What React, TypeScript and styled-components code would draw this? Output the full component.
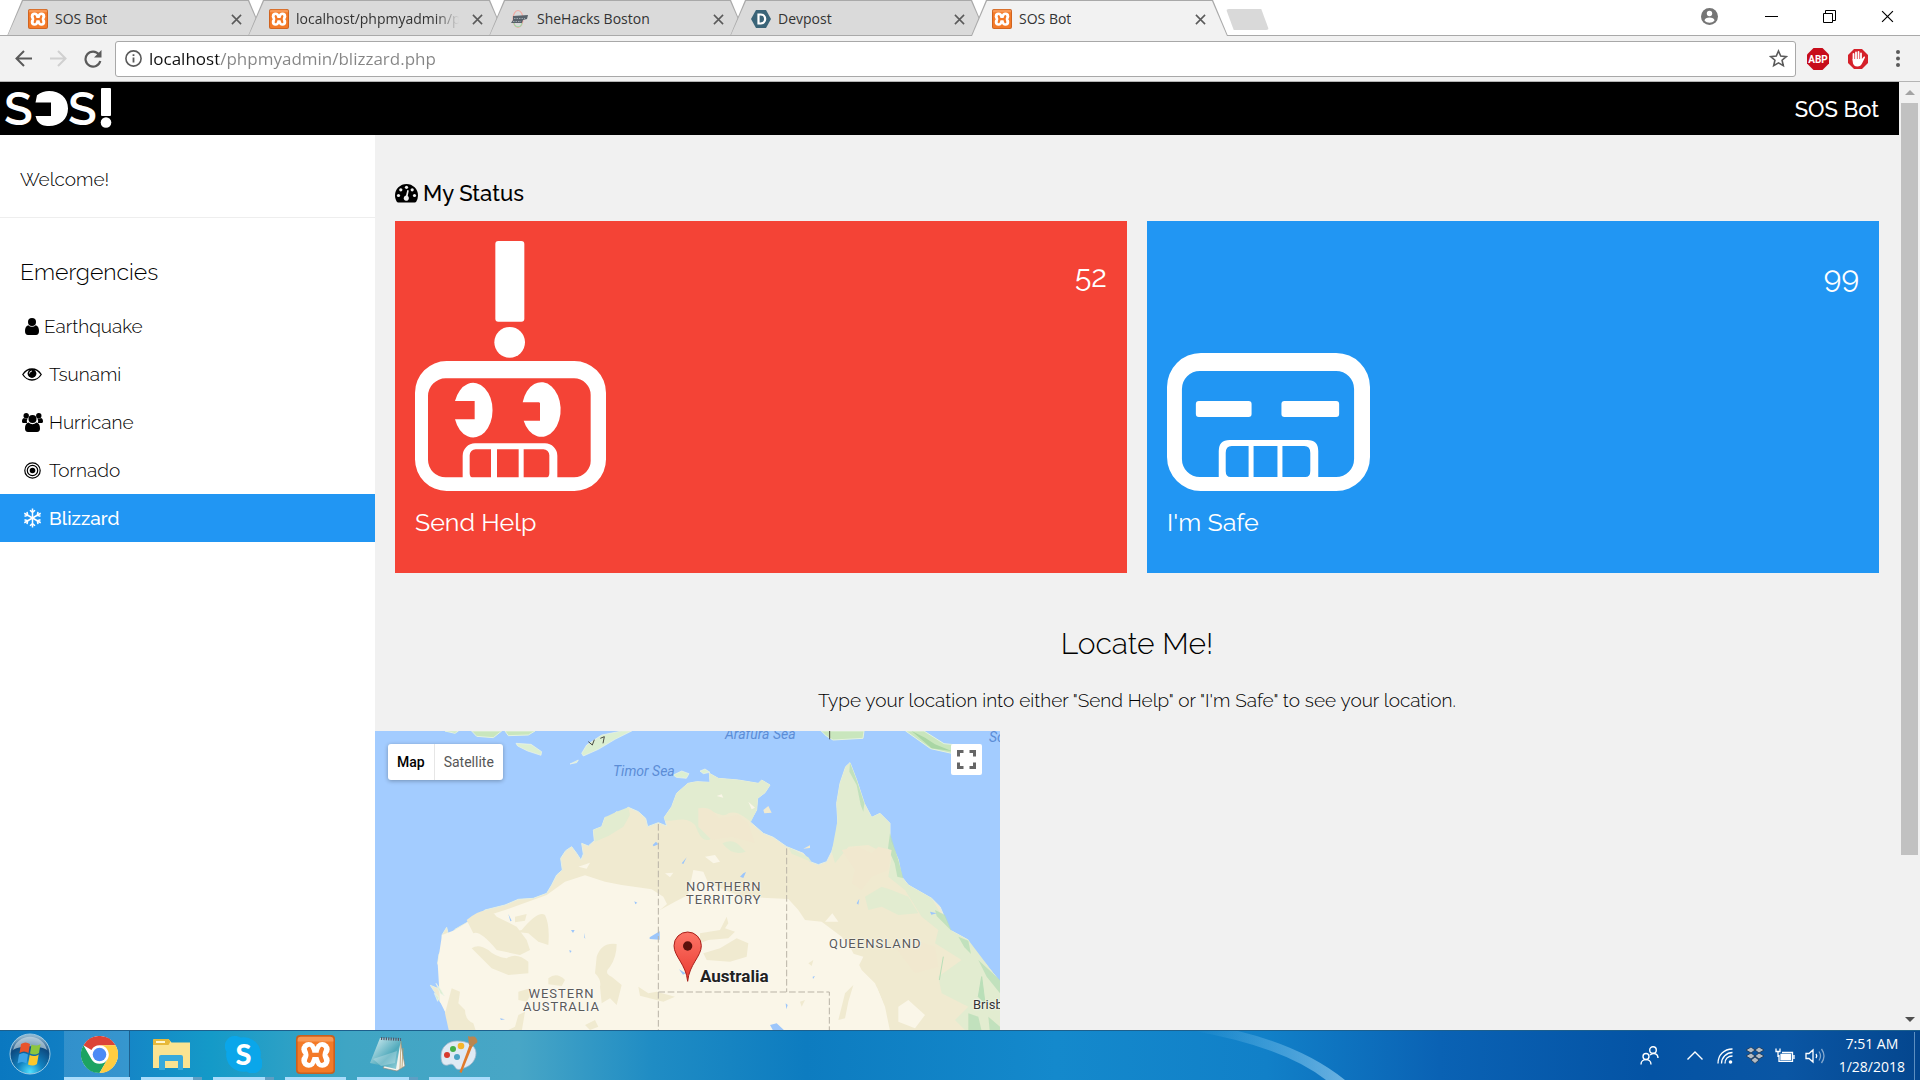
import React from "react";
import styled, { createGlobalStyle, css } from "styled-components";

const pageFont = `Raleway, Lato, "Open Sans", sans-serif`;
const uiFont = `"Segoe UI", "Open Sans", "Noto Sans", sans-serif`;
const mapFont = `Roboto, "Liberation Sans", sans-serif`;

const GlobalStyle = createGlobalStyle`
  *, *::before, *::after { box-sizing: border-box; }
  body { margin: 0; overflow: hidden; font-family: ${uiFont}; }
  button, input { font: inherit; }
  h1, h2, h3, p, ul { margin: 0; padding: 0; font-weight: 300; }
  ul { list-style: none; }
  a { color: inherit; text-decoration: none; }
  svg { display: block; flex: none; }
`;

const Desktop = styled.div`
  display: flex;
  flex-direction: column;
  height: 100vh;
  background: #fff;
`;

const PlainButton = styled.button`
  display: flex;
  align-items: center;
  justify-content: center;
  padding: 0;
  border: 0;
  background: none;
  color: #5a5a5a;
`;

/* ---------- Browser frame ---------- */

const TabStrip = styled.header`
  display: flex;
  flex: none;
  height: 36px;
  padding-left: 7px;
  background: linear-gradient(#fff, #fff) 0 0 / 100% 35px no-repeat #a9a9a9;
`;

const Tabs = styled.div`
  display: flex;
`;

const TabShape = styled.div<{ $active?: boolean }>`
  position: relative;
  z-index: ${(p) => (p.$active ? 2 : 1)};
  display: flex;
  align-items: center;
  width: 257px;
  height: 36px;
  margin-right: -16px;
  padding: 2px 20px 0 21px;
  isolation: isolate;

  &::before,
  &::after {
    content: "";
    position: absolute;
    z-index: -1;
    inset: 0;
    background: #a9a9a9;
    clip-path: polygon(0 100%, 15px 0, calc(100% - 15px) 0, 100% 100%);
  }
  &::after {
    inset: 1px 1px ${(p) => (p.$active ? "0" : "1px")};
    background: ${(p) => (p.$active ? "#f2f2f2" : "#dadada")};
  }
`;

const TabTitle = styled.button<{ $fade?: boolean }>`
  display: flex;
  flex: 1;
  align-items: center;
  gap: 7px;
  min-width: 0;
  padding: 0;
  border: 0;
  background: none;
  color: #333;
  font-size: 14px;
  line-height: 24px;
  white-space: nowrap;

  span {
    overflow: hidden;
    ${(p) =>
      p.$fade &&
      css`
        mask-image: linear-gradient(to right, #000 calc(100% - 24px), transparent);
      `}
  }
`;

const TabClose = styled(PlainButton)`
  width: 16px;
  height: 16px;
  margin-left: 10px;
`;

const NewTab = styled(PlainButton)`
  width: 43px;
  height: 21px;
  margin: 9px 0 0 14px;
  border-radius: 3px;
  background: #d9d9d9;
  clip-path: polygon(0 0, 82% 0, 100% 100%, 18% 100%);
`;

const WindowControls = styled.div`
  display: flex;
  align-items: center;
  gap: 28px;
  height: 32px;
  margin-left: auto;
  padding-right: 18px;

  button {
    width: 30px;
    height: 30px;
    color: #000;
  }
  button:first-child {
    margin-right: 4px;
  }
`;

const Toolbar = styled.nav`
  display: flex;
  flex: none;
  align-items: center;
  height: 46px;
  padding: 0 10px 0 12px;
  background: #f2f2f2;
  border-bottom: 1px solid #b4b4b4;
`;

const NavButtons = styled.div`
  display: flex;
  gap: 13px;
  margin-right: 11px;

  button {
    width: 22px;
    height: 24px;
  }
`;

const AddressBar = styled.div`
  display: flex;
  flex: 1;
  align-items: center;
  gap: 7px;
  height: 36px;
  padding: 0 7px 0 9px;
  border: 1px solid #a8a8a8;
  border-radius: 3px;
  background: #fff;
  color: #5a5a5a;
`;

const AddressInput = styled.input`
  flex: 1;
  min-width: 0;
  padding: 0;
  border: 0;
  outline: 0;
  background: linear-gradient(to right, #111 69px, #858585 69px);
  background-clip: text;
  color: transparent;
  font-size: 17px;
  line-height: 30px;
`;

const Extensions = styled.div`
  display: flex;
  gap: 16px;
  margin-left: 10px;

  button {
    width: 24px;
    height: 24px;
  }
`;

/* ---------- Web page ---------- */

const Viewport = styled.div`
  display: flex;
  flex: 1;
  min-height: 0;
`;

const Page = styled.div`
  display: flex;
  flex: 1;
  flex-direction: column;
  min-width: 0;
  overflow: hidden;
  background: #f1f1f1;
  color: #000;
  font-family: ${pageFont};
`;

const TopBar = styled.div`
  display: flex;
  flex: none;
  align-items: center;
  justify-content: space-between;
  height: 53px;
  padding: 0 20px 0 5px;
  background: #000;
  color: #fff;
  font-size: 22px;
  font-weight: 500;
  line-height: 32px;
`;

const PageBody = styled.div`
  display: grid;
  grid-template-columns: 375px minmax(0, 1fr);
  flex: 1;
  min-height: 0;
`;

const Sidebar = styled.aside`
  background: #fff;
  font-size: 19px;
  font-weight: 300;
`;

const Welcome = styled.p`
  padding: 30px 20px 24px;
  border-bottom: 1px solid #eee;
  line-height: 28px;
`;

const SidebarTitle = styled.h2`
  padding: 37px 20px 13px;
  font-size: 23px;
  line-height: 34px;
`;

const MenuLink = styled.a<{ $active?: boolean; $tight?: boolean }>`
  display: flex;
  align-items: center;
  gap: ${(p) => (p.$tight ? "0" : "5px")};
  height: 48px;
  padding: 0 20px;

  ${(p) =>
    p.$active &&
    css`
      background: #2196f3;
      color: #fff;
      font-weight: 500;
    `}
`;

const IconSlot = styled.span`
  display: flex;
  justify-content: center;
  width: 24px;
`;

const Main = styled.main`
  min-width: 0;
`;

const StatusTitle = styled.h2`
  display: flex;
  align-items: center;
  gap: 5px;
  padding: 41px 20px 11px;
  font-size: 22px;
  font-weight: 500;
  line-height: 34px;
`;

const Cards = styled.div`
  display: grid;
  grid-template-columns: 1fr 1fr;
  gap: 20px;
  padding: 0 20px;
`;

const Card = styled.button<{ $color: string }>`
  display: flex;
  flex-direction: column;
  gap: 12px;
  padding: 20px 20px 32px;
  border: 0;
  background: ${(p) => p.$color};
  color: #fff;
  text-align: left;
`;

const CardTop = styled.span`
  display: flex;
  align-items: flex-end;
  justify-content: space-between;
  width: 100%;
  height: 250px;
`;

const Count = styled.span`
  align-self: flex-start;
  padding-top: 14px;
  font-size: 30px;
  line-height: 44px;
`;

const CardLabel = styled.span`
  font-size: 25px;
  line-height: 38px;
`;

const Locate = styled.section`
  padding: 48px 0 17px;
  text-align: center;
`;

const LocateTitle = styled.h2`
  font-size: 30px;
  line-height: 45px;
`;

const LocateHint = styled.p`
  padding-top: 20px;
  font-size: 19px;
  line-height: 28px;
`;

const MapCanvas = styled.div`
  position: relative;
  width: 625px;
  height: 400px;
  overflow: hidden;
  background: #a3ccff;
  font-family: ${mapFont};
`;

const MapLabel = styled.span<{ $x: number; $y: number; $kind: "sea" | "region" | "country" | "city" }>`
  position: absolute;
  left: ${(p) => p.$x}px;
  top: ${(p) => p.$y}px;
  text-align: center;
  white-space: pre;
  font-size: 13px;
  line-height: 13px;
  color: #5a5a5a;
  text-shadow: 0 0 2px #fff, 0 0 2px #fff;

  ${(p) =>
    p.$kind === "sea" &&
    css`
      color: #5c8dd6;
      font-size: 14px;
      font-style: italic;
      text-shadow: none;
    `}
  ${(p) =>
    p.$kind === "region" &&
    css`
      letter-spacing: 1px;
    `}
  ${(p) =>
    p.$kind === "city" &&
    css`
      color: #333;
    `}
  ${(p) =>
    p.$kind === "country" &&
    css`
      color: #222;
      font-size: 17px;
      font-weight: 700;
    `}
`;

const MapTypes = styled.div`
  position: absolute;
  left: 13px;
  top: 13px;
  display: flex;
  height: 36px;
  border-radius: 3px;
  background: #fff;
  box-shadow: 0 1px 4px rgba(0, 0, 0, 0.3);
`;

const MapType = styled(PlainButton)<{ $on?: boolean }>`
  padding: 0 9px;
  color: ${(p) => (p.$on ? "#000" : "#565656")};
  font-size: 14px;
  font-weight: ${(p) => (p.$on ? 500 : 400)};

  & + & {
    border-left: 1px solid #e6e6e6;
  }
`;

const Fullscreen = styled(PlainButton)`
  position: absolute;
  right: 18px;
  top: 13px;
  width: 31px;
  height: 31px;
  border-radius: 2px;
  background: #fff;
`;

const ScrollBar = styled.div`
  display: flex;
  flex: none;
  flex-direction: column;
  align-items: center;
  width: 21px;
  background: #f1f1f1;
`;

const ScrollArrow = styled(PlainButton)`
  width: 21px;
  height: 21px;
`;

const ScrollTrack = styled.div`
  flex: 1;
  width: 17px;
`;

const ScrollThumb = styled.div`
  height: 83%;
  background: #c1c1c1;
`;

/* ---------- Taskbar ---------- */

const TaskBar = styled.footer`
  position: relative;
  display: flex;
  flex: none;
  height: 50px;
  border-top: 1px solid #1d5f8c;
  background: linear-gradient(
    to right,
    #0a78c0 0,
    #1583c6 6%,
    #149ac8 11%,
    #3fa5c4 18%,
    #48a6c6 27%,
    #1f8cc4 34%,
    #0d7cc0 42%,
    #1489cc 55%,
    #1180c8 66%,
    #0a62b4 75%,
    #0453a4 86%,
    #0a56a4 93%,
    #04468e 100%
  );
  color: #fff;
`;

const Glow = styled.svg`
  position: absolute;
  left: 58%;
  top: 0;
`;

const StartButton = styled(PlainButton)`
  width: 60px;
  padding-bottom: 4px;
`;

const Apps = styled.div`
  display: flex;
  align-items: flex-end;
  gap: 11px;
  padding-left: 4px;
`;

const TaskButton = styled(PlainButton)<{ $active?: boolean; $stacked?: boolean }>`
  width: ${(p) => (p.$active ? "66px" : "61px")};
  height: 49px;
  border-bottom: 3px solid #aadcfb;
  ${(p) =>
    p.$active &&
    css`
      padding-left: 4px;
      background: linear-gradient(to right, rgba(255, 255, 255, 0.14) 65px, #1c5f8f 65px);
    `}
  ${(p) =>
    p.$stacked &&
    css`
      border-image: linear-gradient(to right, #aadcfb 50px, #5f9fc4 50px) 3;
    `}
`;

const Tray = styled.div`
  position: relative;
  display: flex;
  align-items: center;
  margin-left: auto;
`;

const TrayIcons = styled.div`
  display: flex;
  gap: 6px;
  padding-right: 12px;

  button {
    width: 24px;
    height: 24px;
    color: #fff;
  }
  button:first-child {
    margin-right: 15px;
  }
`;

const Clock = styled.div`
  display: flex;
  flex-direction: column;
  align-items: center;
  padding: 0 9px 2px 0;
  border-right: 1px solid #5d8fc0;
  margin-right: 5px;
  font-size: 14px;
  line-height: 23px;
`;

/* ---------- Drawings ---------- */

const Xampp = ({ size = 20 }: { size?: number }) => (
  <svg width={size} height={size} viewBox="0 0 24 24">
    <rect width="24" height="24" rx="2.5" fill="#c9601f" />
    <rect x="1" y="1" width="22" height="22" rx="2" fill="#f47a28" />
    <path d="M1 3a2 2 0 0 1 2-2h18a2 2 0 0 1 2 2v1H1z" fill="#f9a566" opacity=".7" />
    <g fill="#fff">
      <circle cx="7.800" cy="8.800" r="4.500" />
      <circle cx="16.200" cy="8.800" r="4.500" />
      <circle cx="7.800" cy="15.700" r="4.500" />
      <circle cx="16.200" cy="15.700" r="4.500" />
      <path d="M9 7.500h6v9.500H9z" />
    </g>
    <path
      d="M8 8.600q2 3.600 0 7.200M16 8.600q-2 3.600 0 7.200M9.500 12.200h5"
      fill="none"
      stroke="#f47a28"
      strokeWidth="2.600"
      strokeLinecap="round"
    />
  </svg>
);

const SheHacks = () => (
  <svg width="20" height="20" viewBox="0 0 20 20">
    <ellipse cx="8" cy="10" rx="5" ry="8.500" fill="none" stroke="#f2a8a0" strokeWidth="1.200" />
    <path d="M4 14c1 5 7 5 8 0" fill="none" stroke="#9fd8a8" strokeWidth="1.200" />
    <path d="M3 7l15-1-1 4-4 1-1 3H1l2-3z" fill="#59626b" />
    <path d="M4 9.500h11M3 12.500h8" stroke="#aeb6bd" strokeWidth=".8" strokeDasharray="1.500 1" />
  </svg>
);

const Devpost = () => (
  <svg width="20" height="20" viewBox="0 0 20 20">
    <path d="M5 1h10l5 9-5 9H5l-5-9z" fill="#3a6478" />
    <path d="M7.500 5.500h2.200a4.500 4.500 0 0 1 0 9H7.500z" fill="none" stroke="#fff" strokeWidth="2.200" />
  </svg>
);

const Cross = ({ size = 11, width = 1.7 }: { size?: number; width?: number }) => (
  <svg width={size} height={size} viewBox="0 0 12 12" stroke="currentColor" strokeWidth={width}>
    <path d="M1 1l10 10M11 1L1 11" />
  </svg>
);

const LogoArt = styled.svg`
  overflow: visible;
  fill: #fff;
  font-family: ${pageFont};
  font-size: 47px;
  font-weight: 600;
`;

const Logo = () => (
  <LogoArt width="108" height="42" viewBox="0 0 108 42" role="img" aria-label="SOS!">
    <text x="-1" y="37">S</text>
    <path d="M32 7.200C36 4 40 3 44 3c11 0 19 7 19 17.500S55 38 44 38c-5 0-9-1-12-5.500L30.500 28H46V14.500H30.500z" />
    <text x="63" y="37">S</text>
    <rect x="96" y="0" width="10" height="28" rx="1" />
    <circle cx="101" cy="34.500" r="5.300" />
  </LogoArt>
);

const AlertRobot = () => (
  <svg width="191" height="250" viewBox="0 0 573 750" fill="#fff" fillRule="evenodd">
    <rect x="241" width="87" height="242" rx="9" />
    <circle cx="284" cy="304" r="46" />
    <path d="M95 360h383a95 95 0 0 1 95 95v200a95 95 0 0 1-95 95H95a95 95 0 0 1-95-95V455a95 95 0 0 1 95-95zM92 412a53 53 0 0 0-53 53v191a53 53 0 0 0 53 53h385a50 50 0 0 0 50-53V462a50 50 0 0 0-50-50z" />
    <path d="M120 480a58 82 0 1 1 0 55h59v-55z" />
    <path d="M323 484a58 82 0 1 1 3 55h49v-52a4 4 0 0 0-4-3z" />
    <path d="M180 607h210a37 37 0 0 1 37 37v80H143v-80a37 37 0 0 1 37-37zM182 625a18 18 0 0 0-18 18v54q0 15 14 15h50v-87zM246 625v87h65v-87zM326 625v87h63q14 0 14-15v-54a18 18 0 0 0-18-18z" />
  </svg>
);

const CalmRobot = () => (
  <svg width="203" height="138" viewBox="0 0 204 138" preserveAspectRatio="none" fill="#fff" fillRule="evenodd">
    <path d="M34 0h136a34 34 0 0 1 34 34v70a34 34 0 0 1-34 34H34a34 34 0 0 1-34-34V34A34 34 0 0 1 34 0zM33 18a18 18 0 0 0-18 18v70a18 18 0 0 0 18 18h137a18 18 0 0 0 18-18V36a18 18 0 0 0-18-18z" />
    <rect x="29" y="48" width="56" height="16" rx="3" />
    <rect x="115" y="48" width="58" height="16" rx="3" />
    <path d="M63 87h78q11 0 11 11v30H52V98q0-11 11-11zM65 93q-6 0-6 7v18q0 6 5 6h18V93zM87 93v31h24V93zM116 93v31h23q5 0 5-6v-18q0-7-6-7z" />
  </svg>
);

const UserIcon = () => (
  <svg width="14" height="17" viewBox="0 0 14 17" fill="currentColor">
    <circle cx="7" cy="4" r="4" />
    <path d="M3.300 7.200C1 7.800 0 10 0 13c0 2.400 1.100 4 3 4h8c1.900 0 3-1.600 3-4 0-3-1-5.200-3.300-5.800a5.200 5.200 0 0 1-7.400 0z" />
  </svg>
);

const EyeIcon = () => (
  <svg width="20" height="13" viewBox="0 0 20 13">
    <path d="M.8 6.500C3 3 6 1 10 1s7 2 9.200 5.500C17 10 14 12 10 12S3 10 .8 6.500z" fill="none" stroke="currentColor" strokeWidth="1.300" />
    <circle cx="10" cy="5.500" r="4.400" fill="currentColor" />
    <path d="M7.500 5.500A2.500 2.500 0 0 1 10 3" fill="none" stroke="#fff" strokeWidth=".9" />
  </svg>
);

const UsersIcon = () => (
  <svg width="21" height="19" viewBox="0 0 21 19" fill="currentColor">
    <circle cx="4.200" cy="2.700" r="2.700" />
    <circle cx="16.800" cy="2.700" r="2.700" />
    <circle cx="10.500" cy="6" r="4" />
    <path d="M2 5C.5 5.300 0 6.700 0 8.500 0 9.600.8 10 1.800 10h3.400A6 6 0 0 1 5.600 5.300 4 4 0 0 1 2 5zM19 5c1.500.3 2 1.700 2 3.500 0 1.100-.8 1.500-1.800 1.500h-3.400a6 6 0 0 0-.4-4.700A4 4 0 0 0 19 5z" />
    <path d="M6.600 9.500C4 10 3 12.300 3 15.500 3 17.800 4 19 6 19h9c2 0 3-1.200 3-3.500 0-3.200-1-5.500-3.600-6a5.400 5.400 0 0 1-7.800 0z" />
  </svg>
);

const TargetIcon = () => (
  <svg width="17" height="17" viewBox="0 0 17 17" fill="none" stroke="currentColor">
    <circle cx="8.500" cy="8.500" r="7.700" strokeWidth="1.200" />
    <circle cx="8.500" cy="8.500" r="5.200" strokeWidth="1.200" />
    <circle cx="8.500" cy="8.500" r="2.800" fill="currentColor" stroke="none" />
  </svg>
);

const SnowIcon = () => (
  <svg width="19" height="20" viewBox="0 0 19 20" fill="none" stroke="currentColor" strokeWidth="1.500">
    {[0, 60, 120, 180, 240, 300].map((a) => (
      <path key={a} transform={`rotate(${a} 9.500 10)`} d="M9.500 10V.5M7 2.200l2.500 2.300L12 2.200" />
    ))}
  </svg>
);

const DashIcon = () => (
  <svg width="23" height="19" viewBox="0 0 23 19">
    <path d="M11.500 0A11.500 11.500 0 0 0 0 11.500c0 2.300.7 4.400 1.800 6.200.3.500.8.800 1.400.8h16.600c.6 0 1.100-.3 1.400-.8a11.500 11.500 0 0 0 1.800-6.200A11.500 11.500 0 0 0 11.500 0z" />
    <g fill="#f1f1f1">
      <circle cx="3.500" cy="11.500" r="1.600" />
      <circle cx="5.800" cy="5.800" r="1.600" />
      <circle cx="11.500" cy="3.300" r="1.600" />
      <circle cx="17.200" cy="5.800" r="1.600" />
      <circle cx="19.500" cy="11.500" r="1.600" />
      <path d="M12.300 6l1.500.4-1.100 5.600a2.600 2.600 0 1 1-1.700-.4z" />
    </g>
  </svg>
);

const lake = "#9cc6fb";

const AustraliaMap = () => (
  <svg width="625" height="400" viewBox="0 3 1875 1200">
    <path
      d="M225 1203L228 890 215 855 205 825 195 815 185 795 166 766 188 775 205 808 220 800 219 780 207 752 195 715 188 700 192 672 205 655 201 615 215 592 222 622 240 598 280 575 330 540 390 525 430 508 475 505 515 490 530 465 545 435 562 420 557 385 572 362 590 350 605 370 618 390 625 372 620 340 640 348 658 332 655 300 680 290 690 262 705 262 725 245 735 250 760 232 790 245 812 265 818 290 850 278 875 288 868 262 890 230 905 190 939 160 965 155 1005 157 1003 130 1030 145 1090 150 1150 160 1160 150 1185 165 1170 188 1148 205 1145 240 1125 275 1165 310 1195 322 1235 350 1285 370 1305 395 1330 404 1355 395 1370 365 1385 320 1388 270 1385 220 1395 160 1412 110 1425 98 1445 150 1468 220 1490 262 1515 250 1545 280 1545 330 1570 390 1580 440 1600 465 1670 505 1695 530 1725 600 1780 630 1790 670 1830 700 1875 755V1203z"
      fill="#f0ead0"
      stroke="#e6f0e2"
      strokeWidth="3"
    />
    <g fill="#e2ecd0">
      <path d="M870 272L868 262 890 230 905 190 939 160 965 155 1005 157 1003 130 1030 145 1090 150 1150 160 1160 150 1185 165 1170 188 1148 205 1145 240 1128 275C1110 265 1090 240 1060 250 1040 270 1010 230 970 240 1010 280 1060 300 1020 320 985 345 975 320 960 285 930 255 900 275 870 272z" />
      <path d="M660 335L655 300 680 290 690 262 725 245 760 232 765 255 745 290 700 318z" />
      <path d="M1370 365L1388 270 1385 220 1395 160 1412 110 1425 98 1445 150 1468 220 1490 262 1515 250 1545 280 1545 330 1570 390 1580 440 1600 465 1670 505 1725 600 1780 630 1875 755V1203H1790L1770 900 1740 870 1780 830 1700 790 1690 740 1760 690 1680 640 1690 600 1640 560 1590 480 1540 440 1550 380 1480 345 1420 350 1380 400z" />
      <path d="M1042 340q30-15 50 5l20 20q-40 15-70-25zM1240 352l60 30 10 14-60-25zM1470 500l50-30 30 10 50 20 30 50-60 5-50-25-40 10z" />
    </g>
    <g fill="#b9dfb8">
      <path d="M1425 98l20 52 23 70-3 25-8-20-12-60-22-40zM1545 310l25 80 15 55-18-5-8-40-20-45zM1680 540l30 15 20 48-45-45zM1750 620l30 12 8 40-20-20zM1810 690l65 60v40l-40-50zM1780 850l30 10 10 43h-40zM1840 860l35 30v20h-30z" opacity=".8" />
      <path d="M1705 680l-12 70M1820 740l10 80-20-20z" stroke="#b9dfb8" strokeWidth="3" />
    </g>
    <g fill="#f1e8cf">
      <path d="M970 235q40-10 60 30l60-10 30 25 20 60-70-20-60 10-40-40zM1400 360l50-10 40 20 20-20 40 10-10 60-50 20-30 40-30-20 10-40zM1560 650l60-20 60 20 10 60-70 20z" />
    </g>
    <g fill="#faf6e8">
      <path d="M228 900L215 855 195 815 188 700 201 615 240 600 280 575 390 540 515 495 570 455 630 436 690 455 740 465 830 478 865 500 876 522 855 540 900 515 939 495 955 420 985 425 1000 460 1100 500 1240 507 1270 540 1290 570 1340 575 1400 620 1430 660 1460 720 1500 760 1530 830 1545 903V1203H225z" />
      <path d="M1350 575l22-25 18 25zM1430 670l35 10-20 40zM1480 810l25-40 20 50-20 20zM1570 830l30-20 50 45-30 40-50-20zM870 430l25-2-10 14zM990 380l30-5 15 20-20 5zM610 410l35-12-10 18zM1120 215l20 18-10 5zM1025 198l15-5 5 10z" />
    </g>
    <g fill="#f0ead0">
      <path d="M275 570q60-50 90-10l60 30 30 40 10 30-30 15-70-15q-50-60-70-50-10-20-20-40z" />
      <path d="M440 600q50-60 70-45 15 30 10 90l-30-10-30-25-40-5zM420 560l35-8-5 20-30 5zM290 655q20-15 50 5 20 20 55 25 30-20 65 10v35l-60 5-50-20z" />
      <path d="M665 680q15-45 60-38 0 40-20 68-20 20 5 30l30 25-15 60-20-20-25 15-5-50q5-20-15-40zM520 745q25-20 50 5l-10 18-40-5zM430 785l35-10 5 15-15 25-25-5zM230 775l25 10-5 35 20 20q0 30 25 40l20 60H230l-20-90zM630 885l30-15 10 20-25 10zM790 770l30 20 25-5 55 15-35 15-70-18zM430 855l20-10-10 60h-50l30-15z" />
      <path d="M975 610l60-10 20-40 5 20-10 15 30 10-20 20-60 5-25 10zM985 670l50-15 50-30 35 15-5 40-50 15-70-5zM1290 810l-10 20-5-15zM1410 790l25-25-15 50-10 50-20 5zM1300 700l15-10-5 18z" />
    </g>
    <g fill={lake}>
      <path d="M824 622l30-18v25l-30-2zM833 345l10-10 7 8-14 6zM778 514l9 4-6 5zM588 600h11l-5 9zM583 660l7 3-5 6zM627 608l4 18-3-3zM375 865l15 3-12 2zM1095 440l10-10 8-4-8 18zM1185 885l20-5 25 23h-35zM1232 820l6 5-4 13zM1313 740l7-2-6 9zM400 552l10 20-4 2zM912 718l20 12-8 4zM1665 545l20 5-16 4zM1445 520l8-14-3 18zM920 400l15-18-10 20z" />
    </g>
    <g fill="#dcefd2" stroke="#eef5e8" strokeWidth="2">
      <path d="M423 40l45 3 32 22-2 11-40-13-30-15zM620 70l15-25 45-30 60-12h30l-50 25-50 30-45 20zM585 102l25-12-5 8zM895 135l25-12 22 8-8 14-30-3zM975 123l15-6 15 10-20 4zM183 760l15 20 10 18-12-8zM178 790l14 12-4 12z" />
    </g>
    <g fill="#c9e6bd" stroke="#e4f2de" strokeWidth="3">
      <path d="M210 3h40l-10 7zM290 3h90l-25 20-50-4zM390 3h90l-20 12-60 2zM1339 3h128l-3 22-90 5-20-12zM1592 3h55l60 38 80 8-30 27-90-20z" />
    </g>
    <path d="M1610 3l40 20 30 20 50 20-60-8z" fill="#a9d6a4" />
    <path d="M640 35l12 10 6-16M676 25l12-5-4 20M1364 3v25" fill="none" stroke="#4a4a42" strokeWidth="3" />
    <path d="M1165 240l15-12 10 20-22 2zM1285 356l20-10v8zM268 546l8-5" fill="#f0ead0" />
    <path d="M850 282V1203M850 786H1363V1203M1235 355V786" fill="none" stroke="#b9b3a6" strokeWidth="3" strokeDasharray="20 8" />
    <defs>
      <linearGradient id="pin" x2="0" y2="1">
        <stop offset="0" stopColor="#fd7567" />
        <stop offset="1" stopColor="#e93a30" />
      </linearGradient>
    </defs>
    <path d="M938 754c-5-52-41-74-41-107a41 41 0 0 1 82 0c0 33-36 55-41 107z" fill="url(#pin)" stroke="#a8201a" strokeWidth="3" />
    <circle cx="938" cy="648" r="14" fill="#5c100c" />
  </svg>
);

const Star = () => (
  <svg width="19" height="19" viewBox="0 0 24 24" fill="none" stroke="currentColor" strokeWidth="2">
    <path d="M12 2.500l2.800 6.500 7 .6-5.300 4.600 1.600 6.900L12 17.500l-6.100 3.600 1.600-6.900L2.200 9.600l7-.6z" />
  </svg>
);

const AbpIcon = () => (
  <svg width="22" height="22" viewBox="0 0 22 22">
    <path d="M6.500 0h9L22 6.500v9L15.500 22h-9L0 15.500v-9z" fill="#c70d1b" />
    <text x="11" y="14.500" textAnchor="middle" fontFamily="Roboto, sans-serif" fontWeight="700" fontSize="10" fill="#fff">ABP</text>
  </svg>
);

const HandIcon = () => (
  <svg width="20" height="20" viewBox="0 0 20 20">
    <path d="M6 0h8l6 6v8l-6 6H6l-6-6V6z" fill="#d5212a" />
    <path d="M5.500 5v6M8 3.500V11M10.500 3v8M13 4.500V11" stroke="#fff" strokeWidth="1.800" strokeLinecap="round" />
    <path d="M4.700 10h9.200l1.800-2.200c.8-.6 1.600 0 1.200.9L14 14.500c-1 2-2.200 3-4.500 3-3 0-4.800-2-4.800-5z" fill="#fff" />
  </svg>
);

const WindowsOrb = () => (
  <svg width="42" height="42" viewBox="0 0 42 42">
    <defs>
      <radialGradient id="orb" cx=".5" cy=".95" r=".9">
        <stop offset="0" stopColor="#4fe0ff" />
        <stop offset=".35" stopColor="#1182c0" />
        <stop offset=".75" stopColor="#0d4a80" />
        <stop offset="1" stopColor="#8fb4cc" />
      </radialGradient>
    </defs>
    <circle cx="21" cy="21" r="20" fill="url(#orb)" stroke="#9cc9e2" strokeWidth="1" />
    <path d="M4 17A17.500 17.500 0 0 1 38 17c-8-5-26-5-34 0z" fill="#d5e2ea" opacity=".6" />
    <path d="M12 11c3-2 6-2 9 0l-1.500 9c-3-2-6-2-9 0z" fill="#e8542c" />
    <path d="M22.500 11.500c3 1.500 6 1.500 9-.5L30 20c-3 2-6 2-9 .5z" fill="#8cc63e" />
    <path d="M10 21.500c3-2 6-2 9 0l-1.500 9c-3-2-6-2-9 0z" fill="#3ba3e6" />
    <path d="M20.700 22c3 1.500 6 1.500 9-.5L28 31c-3 2-6 2-9 .5z" fill="#fbc72b" />
  </svg>
);

const ChromeIcon = () => (
  <svg width="37" height="37" viewBox="0 0 48 48">
    <circle cx="24" cy="24" r="24" fill="#fff" />
    <path d="M3.200 12A24 24 0 0 1 44.800 12H24a12 12 0 0 0-10.400 6z" fill="#dc4437" />
    <path d="M3.200 12A24 24 0 0 0 24 48l10.400-18A12 12 0 0 1 13.600 30z" fill="#1da362" />
    <path d="M44.800 12A24 24 0 0 1 24 48l10.400-18A12 12 0 0 0 34.400 18 12 12 0 0 0 24 12z" fill="#ffcd41" />
    <circle cx="24" cy="24" r="11" fill="#fff" />
    <circle cx="24" cy="24" r="8.800" fill="#4c8bf5" />
  </svg>
);

const FolderIcon = () => (
  <svg width="37" height="31" viewBox="0 0 37 31">
    <path d="M0 1.500Q0 0 1.500 0h14l3 3.500H37V29H0z" fill="#fbe391" />
    <path d="M0 1.500Q0 0 1.500 0h14l2 2.500-2 3.500H0z" fill="#e7b93a" />
    <rect x="3" y="2" width="9" height="2" fill="#fff6d0" />
    <path d="M6 31V18q0-2 2-2h20q2 0 2 2v13h-5v-9H12v9z" fill="#38a9dc" />
  </svg>
);

const SkypeIcon = () => (
  <svg width="37" height="37" viewBox="0 0 37 37">
    <path d="M10 0c2.500 0 4 .6 5.500 1.500A17 17 0 0 1 35.500 21.500 10 10 0 0 1 21.500 35.500 17 17 0 0 1 1.500 15.500 10 10 0 0 1 10 0z" fill="#0aa6ea" />
    <text x="18.500" y="28.500" textAnchor="middle" fontFamily="Lato, sans-serif" fontWeight="900" fontSize="29" fill="#fff">S</text>
  </svg>
);

const NotepadIcon = () => (
  <svg width="37" height="36" viewBox="0 0 37 36">
    <defs>
      <linearGradient id="pad" x2="1" y2="1">
        <stop offset="0" stopColor="#dff3f6" />
        <stop offset=".6" stopColor="#4fa9bb" />
        <stop offset="1" stopColor="#9bd3dc" />
      </linearGradient>
    </defs>
    <path d="M31 3l5 27-8 5-14-3z" fill="#f4f4ee" stroke="#8a8a80" strokeWidth=".7" />
    <path d="M32 5l-1 28M34 12l-1 20" stroke="#b59a6a" strokeWidth=".8" />
    <path d="M11 2l21 1-5 30L1 27z" fill="url(#pad)" />
    <path d="M4 23l24-8-2 12-14 3z" fill="#fff" opacity=".25" />
    <path d="M12 2.500l20 1" stroke="#556" strokeWidth="3" strokeDasharray="1.200 1.200" />
  </svg>
);

const PaintIcon = () => (
  <svg width="40" height="38" viewBox="0 0 40 38">
    <path d="M17 6C8 6 1 12 1 21c0 8 3 10 7 9 4-2 6 0 7 2 1 3 5 3 9 1 7-2 12-8 12-15C36 10 27 6 17 6z" fill="#dfeaf4" stroke="#9fb6ca" strokeWidth=".8" />
    <circle cx="17" cy="22" r="3" fill="#4aa3c4" />
    <circle cx="7" cy="20" r="3" fill="#d83a2e" />
    <circle cx="13" cy="14" r="3" fill="#43b04a" />
    <circle cx="21" cy="11" r="3.300" fill="#f5b52a" />
    <path d="M29.500 10l3 1-11 27-2-1z" fill="#e07a2a" />
    <path d="M28 1c3 2 6-1 8 2s2 5-1 6l-3 3-3-2z" fill="#b98650" />
  </svg>
);

const stroke = { fill: "none", stroke: "currentColor" } as const;

const tabs = [
  { title: "SOS Bot", icon: <Xampp /> },
  { title: "localhost/phpmyadmin/php", icon: <Xampp />, fade: true },
  { title: "SheHacks Boston", icon: <SheHacks /> },
  { title: "Devpost", icon: <Devpost /> },
  { title: "SOS Bot", icon: <Xampp />, active: true },
];

const emergencies = [
  { name: "Earthquake", icon: <UserIcon />, tight: true },
  { name: "Tsunami", icon: <EyeIcon /> },
  { name: "Hurricane", icon: <UsersIcon /> },
  { name: "Tornado", icon: <TargetIcon /> },
  { name: "Blizzard", icon: <SnowIcon />, active: true },
];

const apps = [
  { name: "Chrome", icon: <ChromeIcon />, active: true },
  { name: "File Explorer", icon: <FolderIcon />, stacked: true },
  { name: "Skype", icon: <SkypeIcon />, stacked: true },
  { name: "XAMPP", icon: <Xampp size={39} /> },
  { name: "Notepad", icon: <NotepadIcon />, stacked: true },
  { name: "Paint", icon: <PaintIcon /> },
];

const BrowserFrame = () => (
  <>
    <TabStrip>
      <Tabs>
        {tabs.map((t, i) => (
          <TabShape key={i} $active={t.active}>
            <TabTitle $fade={t.fade}>
              {t.icon}
              <span>{t.title}</span>
            </TabTitle>
            <TabClose aria-label="Close tab">
              <Cross />
            </TabClose>
          </TabShape>
        ))}
      </Tabs>
      <NewTab aria-label="New tab" />
      <WindowControls>
        <PlainButton aria-label="Profile">
          <svg width="17" height="17" viewBox="0 0 17 17">
            <circle cx="8.500" cy="8.500" r="8.500" fill="#757575" />
            <circle cx="8.500" cy="5.500" r="2.700" fill="#fff" />
            <path d="M3.500 12.500c0-4 10-4 10 0-2.500 3-7.500 3-10 0z" fill="#fff" />
          </svg>
        </PlainButton>
        <PlainButton aria-label="Minimize">
          <svg width="13" height="13" viewBox="0 0 13 13" {...stroke}>
            <path d="M0 6.500h13" />
          </svg>
        </PlainButton>
        <PlainButton aria-label="Restore">
          <svg width="13" height="13" viewBox="0 0 13 13" {...stroke}>
            <path d="M.5 3.500h9v9h-9zM2.500 3.500v-3h10v10h-3" />
          </svg>
        </PlainButton>
        <PlainButton aria-label="Close">
          <Cross size={13} width={1.1} />
        </PlainButton>
      </WindowControls>
    </TabStrip>
    <Toolbar>
      <NavButtons>
        <PlainButton aria-label="Back">
          <svg width="17" height="17" viewBox="0 0 17 17" {...stroke} strokeWidth="2">
            <path d="M17 8.500H2M9 1L1.500 8.500 9 16" />
          </svg>
        </PlainButton>
        <PlainButton aria-label="Forward">
          <svg width="17" height="17" viewBox="0 0 17 17" fill="none" stroke="#d0d0d0" strokeWidth="2">
            <path d="M0 8.500h15M8 1l7.500 7.500L8 16" />
          </svg>
        </PlainButton>
        <PlainButton aria-label="Reload">
          <svg width="18" height="18" viewBox="0 0 18 18">
            <path d="M15 4.500A7.500 7.500 0 1 0 16.300 11" {...stroke} strokeWidth="2.200" />
            <path d="M17.500 0v7.500H10z" fill="currentColor" />
          </svg>
        </PlainButton>
      </NavButtons>
      <AddressBar>
        <svg width="17" height="17" viewBox="0 0 17 17">
          <circle cx="8.500" cy="8.500" r="7.600" {...stroke} strokeWidth="1.600" />
          <path d="M8.500 7.500v5M8.500 4.200v1.900" stroke="currentColor" strokeWidth="1.800" />
        </svg>
        <AddressInput aria-label="Address" defaultValue="localhost/phpmyadmin/blizzard.php" />
        <PlainButton aria-label="Bookmark">
          <Star />
        </PlainButton>
      </AddressBar>
      <Extensions>
        <PlainButton aria-label="Adblock Plus">
          <AbpIcon />
        </PlainButton>
        <PlainButton aria-label="AdBlock">
          <HandIcon />
        </PlainButton>
        <PlainButton aria-label="Menu">
          <svg width="4" height="17" viewBox="0 0 4 17" fill="currentColor">
            <circle cx="2" cy="2" r="2" />
            <circle cx="2" cy="8.500" r="2" />
            <circle cx="2" cy="15" r="2" />
          </svg>
        </PlainButton>
      </Extensions>
    </Toolbar>
  </>
);

const WebPage = () => (
  <Page>
    <TopBar>
      <Logo />
      <span>SOS Bot</span>
    </TopBar>
    <PageBody>
      <Sidebar>
        <Welcome>Welcome!</Welcome>
        <SidebarTitle>Emergencies</SidebarTitle>
        <ul>
          {emergencies.map((e) => (
            <li key={e.name}>
              <MenuLink href="#" $active={e.active} $tight={e.tight}>
                <IconSlot>{e.icon}</IconSlot>
                {e.name}
              </MenuLink>
            </li>
          ))}
        </ul>
      </Sidebar>
      <Main>
        <StatusTitle>
          <DashIcon />
          My Status
        </StatusTitle>
        <Cards>
          <Card $color="#f44336">
            <CardTop>
              <AlertRobot />
              <Count>52</Count>
            </CardTop>
            <CardLabel>Send Help</CardLabel>
          </Card>
          <Card $color="#2196f3">
            <CardTop>
              <CalmRobot />
              <Count>99</Count>
            </CardTop>
            <CardLabel>I'm Safe</CardLabel>
          </Card>
        </Cards>
        <Locate>
          <LocateTitle>Locate Me!</LocateTitle>
          <LocateHint>Type your location into either "Send Help" or "I'm Safe" to see your location.</LocateHint>
        </Locate>
        <MapCanvas>
          <AustraliaMap />
          <MapLabel $kind="sea" $x={350} $y={-3}>Arafura Sea</MapLabel>
          <MapLabel $kind="sea" $x={238} $y={34}>Timor Sea</MapLabel>
          <MapLabel $kind="sea" $x={614} $y={0}>Solomon Sea</MapLabel>
          <MapLabel $kind="region" $x={311} $y={149}>{"NORTHERN\nTERRITORY"}</MapLabel>
          <MapLabel $kind="region" $x={454} $y={206}>QUEENSLAND</MapLabel>
          <MapLabel $kind="region" $x={148} $y={256}>{"WESTERN\nAUSTRALIA"}</MapLabel>
          <MapLabel $kind="country" $x={325} $y={239}>Australia</MapLabel>
          <MapLabel $kind="city" $x={598} $y={267}>Brisbane</MapLabel>
          <MapTypes>
            <MapType $on>Map</MapType>
            <MapType>Satellite</MapType>
          </MapTypes>
          <Fullscreen aria-label="Full screen">
            <svg width="19" height="19" viewBox="0 0 19 19" fill="none" stroke="#666" strokeWidth="3">
              <path d="M1.500 6.500v-5h5M12.500 1.500h5v5M17.500 12.500v5h-5M6.500 17.500h-5v-5" />
            </svg>
          </Fullscreen>
        </MapCanvas>
      </Main>
    </PageBody>
  </Page>
);

export default function App() {
  return (
    <Desktop>
      <GlobalStyle />
      <BrowserFrame />
      <Viewport>
        <WebPage />
        <ScrollBar>
          <ScrollArrow aria-label="Scroll up">
            <svg width="10" height="5" viewBox="0 0 10 5" fill="#a3a3a3">
              <path d="M0 5l5-5 5 5z" />
            </svg>
          </ScrollArrow>
          <ScrollTrack>
            <ScrollThumb />
          </ScrollTrack>
          <ScrollArrow aria-label="Scroll down">
            <svg width="10" height="5" viewBox="0 0 10 5" fill="#505050">
              <path d="M0 0l5 5 5-5z" />
            </svg>
          </ScrollArrow>
        </ScrollBar>
      </Viewport>
      <TaskBar>
        <Glow width="320" height="49" viewBox="0 0 320 49">
          <defs>
            <linearGradient id="arc">
              <stop offset="0" stopColor="#8fd0f4" stopOpacity="0" />
              <stop offset=".6" stopColor="#8fd0f4" stopOpacity=".4" />
              <stop offset="1" stopColor="#a8dcf8" stopOpacity=".6" />
            </linearGradient>
          </defs>
          <path d="M80 0H124Q190 16 231 49H212Q170 16 80 0z" fill="url(#arc)" />
        </Glow>
        <StartButton aria-label="Start">
          <WindowsOrb />
        </StartButton>
        <Apps>
          {apps.map((a) => (
            <TaskButton key={a.name} aria-label={a.name} $active={a.active} $stacked={a.stacked}>
              {a.icon}
            </TaskButton>
          ))}
        </Apps>
        <Tray>
          <TrayIcons>
            <PlainButton aria-label="People">
              <svg width="19" height="19" viewBox="0 0 19 19" {...stroke} strokeWidth="1.400">
                <circle cx="13" cy="4" r="3.300" />
                <circle cx="6" cy="10.500" r="3" />
                <path d="M1 18.500c0-6.500 10-6.500 10 0M10 9c4-3 8-1 8 3" />
              </svg>
            </PlainButton>
            <PlainButton aria-label="Show hidden icons">
              <svg width="16" height="9" viewBox="0 0 16 9" {...stroke} strokeWidth="1.400">
                <path d="M.5 8.500L8 1l7.500 7.500" />
              </svg>
            </PlainButton>
            <PlainButton aria-label="Network">
              <svg width="16" height="16" viewBox="0 0 16 16" {...stroke} strokeWidth="1.300">
                <path d="M1 15.500C1 7 7 1 15.500 1M4.500 15.500c0-6 5-11 11-11M8 15.500C8 11 11 8 15.500 8" />
                <circle cx="13.500" cy="14" r="1.800" fill="currentColor" stroke="none" />
              </svg>
            </PlainButton>
            <PlainButton aria-label="Dropbox">
              <svg width="20" height="18" viewBox="0 0 20 18" fill="#b4bcc4" stroke="#1c3550" strokeWidth=".8">
                <path d="M6 0l4 3-4 3-5-3zM14 0l5 3-5 3-4-3zM6 6l4 3-4 3-5-3zM14 6l5 3-5 3-4-3zM6 13l4-3 4 3-4 3.500z" />
              </svg>
            </PlainButton>
            <PlainButton aria-label="Battery">
              <svg width="20" height="15" viewBox="0 0 20 15" {...stroke} strokeWidth="1.300">
                <path d="M4 7v6.300h13.500V4.500H7M19 7v4M1 .5v3h4v-3M3 3.500V9" />
                <path d="M6 6.500h9.500v5H6z" fill="currentColor" />
              </svg>
            </PlainButton>
            <PlainButton aria-label="Volume">
              <svg width="20" height="18" viewBox="0 0 20 18" {...stroke} strokeWidth="1.300">
                <path d="M1 6.500h3L8 3v12l-4-3.500H1zM11 7q1.500 2 0 4" />
                <path d="M14 4.500q3 4.500 0 9M16.500 2q5 7 0 14" opacity=".5" />
              </svg>
            </PlainButton>
          </TrayIcons>
          <Clock>
            <span>7:51 AM</span>
            <span>1/28/2018</span>
          </Clock>
        </Tray>
      </TaskBar>
    </Desktop>
  );
}
